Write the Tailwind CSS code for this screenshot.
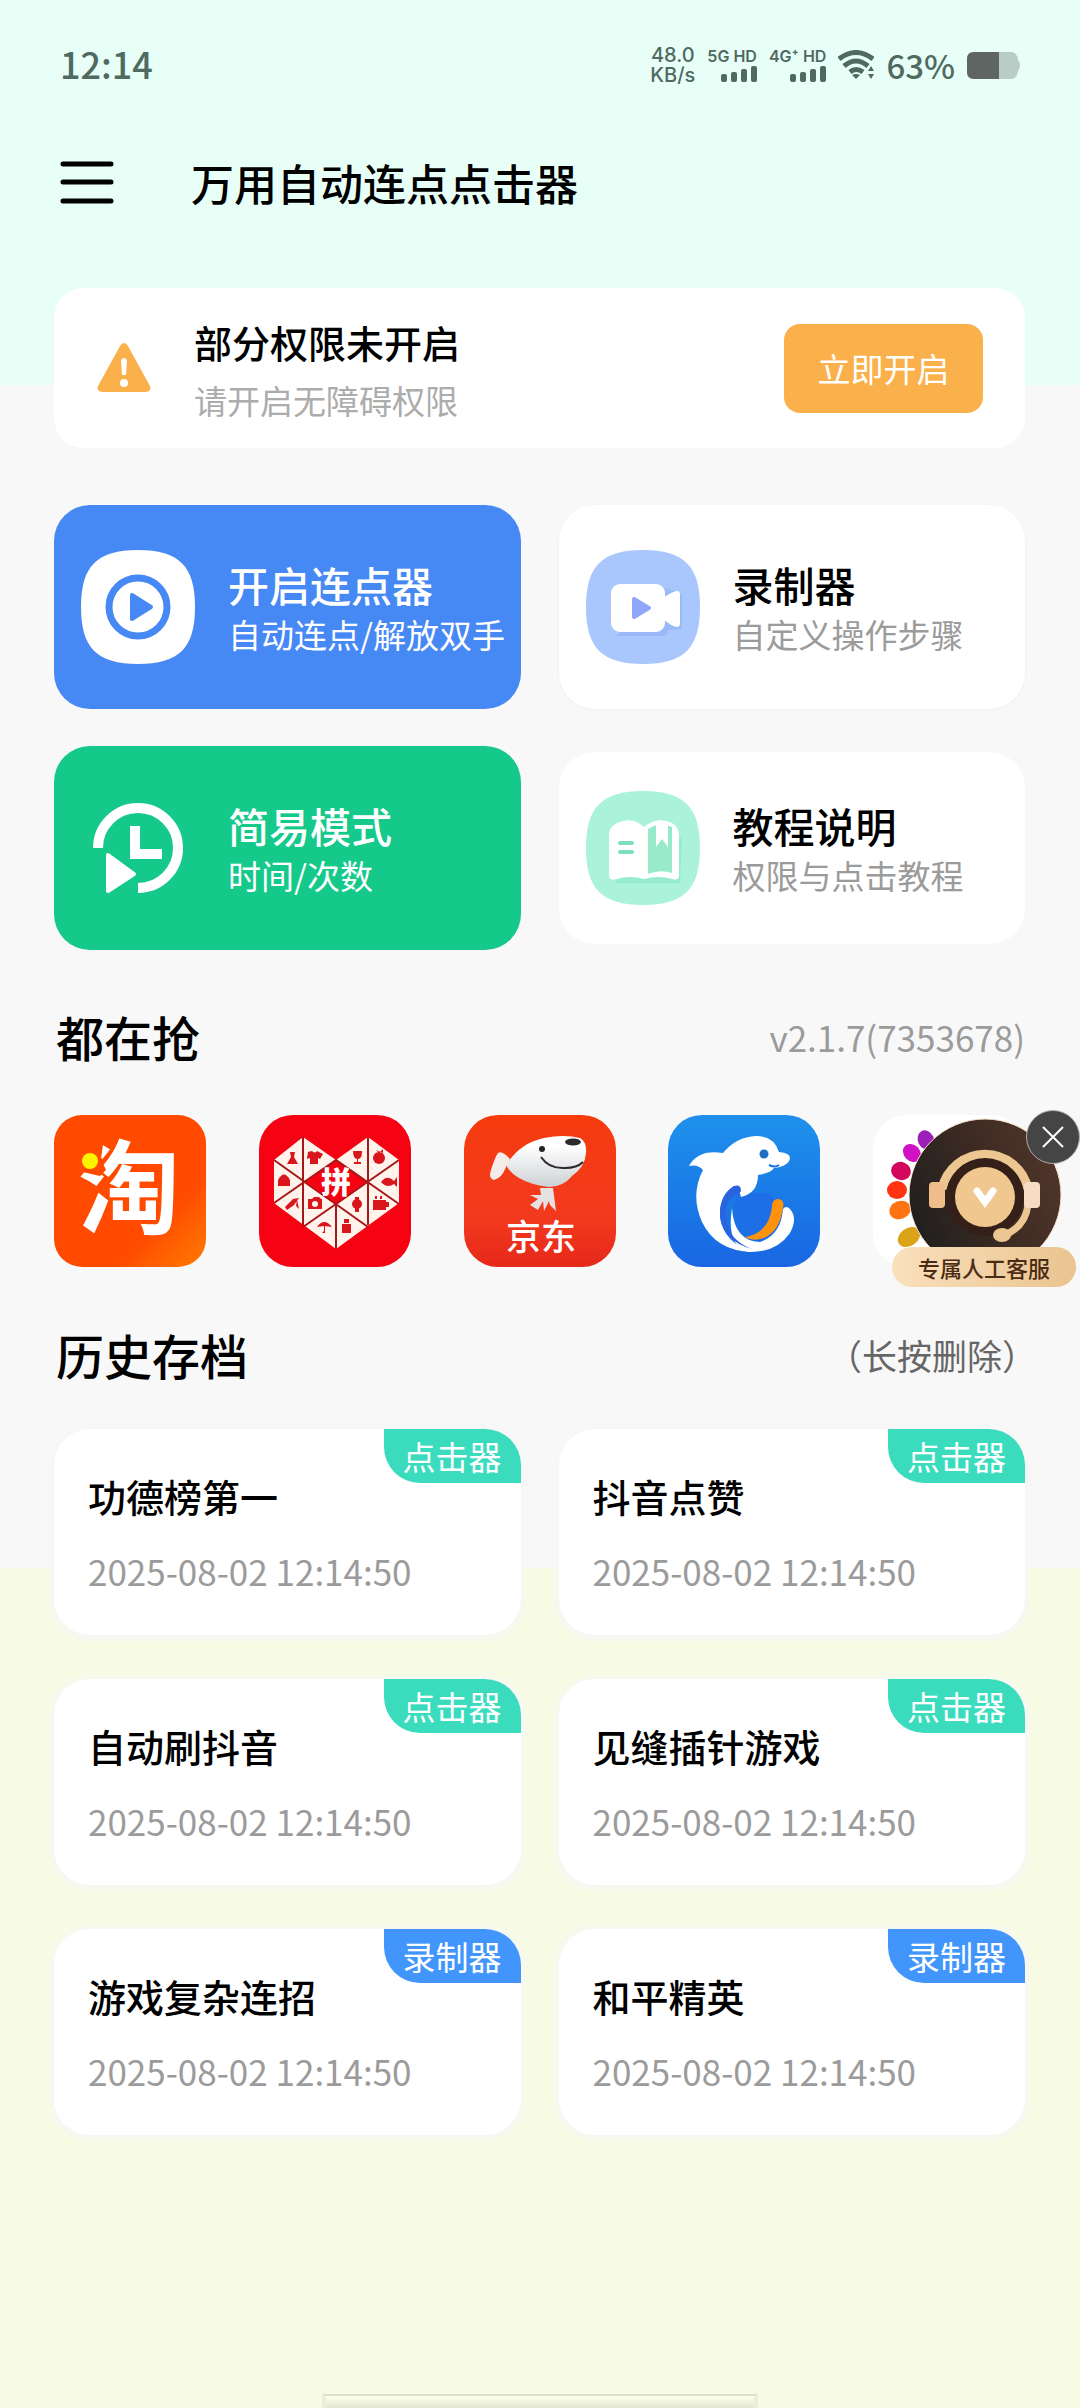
<!DOCTYPE html>
<html lang="zh-CN">
<head>
<meta charset="utf-8">
<meta name="viewport" content="width=device-width, initial-scale=1">
<title>万用自动连点点击器</title>
<script src="https://cdn.jsdelivr.net/npm/@tailwindcss/browser@4"></script>
</head>
<body class="font-['Noto_Sans_CJK_SC',sans-serif] text-black">
<div class="flex min-h-screen flex-col overflow-x-hidden bg-[linear-gradient(#e8fff8_16%,#f8f8f8_16%,#f8f8f8_65.1%,#f8fbe4_65.1%)]">

  <!-- Status bar -->
  <div class="flex h-[130px] items-center justify-between px-[60px] text-[#4f6a61]">
    <time class="pb-1 text-[36px] font-medium leading-none">12:14</time>
    <div class="flex items-center gap-3">
      <div class="text-center font-['Inter',sans-serif] text-[20px] font-medium leading-5"><div>48.0</div><div>KB/s</div></div>
      <div class="flex flex-col items-end gap-0.5">
        <span class="font-['Inter',sans-serif] text-[16px] font-semibold leading-4">5G HD</span>
        <svg class="h-4 w-9" viewBox="0 0 36 16" fill="currentColor"><rect y="8" width="6" height="8" rx="2"/><rect x="10" y="6" width="6" height="10" rx="2"/><rect x="20" y="3" width="6" height="13" rx="2"/><rect x="30" width="6" height="16" rx="2"/></svg>
      </div>
      <div class="flex flex-col items-end gap-0.5">
        <span class="font-['Inter',sans-serif] text-[16px] font-semibold leading-4">4G⁺ HD</span>
        <svg class="h-4 w-9" viewBox="0 0 36 16" fill="currentColor"><rect y="8" width="6" height="8" rx="2"/><rect x="10" y="6" width="6" height="10" rx="2"/><rect x="20" y="3" width="6" height="13" rx="2"/><rect x="30" width="6" height="16" rx="2"/></svg>
      </div>
      <svg class="h-[30px] w-9" viewBox="0 0 36 30" fill="none" stroke="currentColor" stroke-width="5"><path d="M1 9Q18-4 35 9M6 16Q18 6 30 16M12 22Q18 17 25 22" /><path d="M14 25Q18 23 22 25L18 29Z" fill="currentColor" stroke="none"/><path d="M33 16l3 5h-6ZM33 29l3-5h-6Z" fill="currentColor" stroke="none"/></svg>
      <span class="text-[33px] font-medium leading-none">63%</span>
      <svg class="h-[27px] w-[53px]" viewBox="0 0 53 27"><path d="M7 0H44Q50 0 51 8Q55 13 51 19Q50 27 44 27H7Q0 27 0 20V7Q0 0 7 0Z" fill="#b9ccc5"/><path d="M32 0V27H7Q0 27 0 20V7Q0 0 7 0Z" fill="#5f6562"/></svg>
    </div>
  </div>

  <!-- Title bar -->
  <header class="flex h-[104px] items-center gap-[77px] px-[60px]">
    <button type="button" aria-label="菜单" class="h-[43px] w-[54px]">
      <svg class="h-full w-full" viewBox="0 0 54 43" stroke="#000" stroke-width="5" stroke-linecap="round"><path d="M3 3H51M3 21H51M3 40H51"/></svg>
    </button>
    <h1 class="text-[43px] font-medium leading-none">万用自动连点点击器</h1>
  </header>

  <main class="pl-[54px] pr-[55px]">
    <!-- Permission notice -->
    <section class="mt-[54px] flex h-[160px] items-center rounded-[30px] bg-white pl-[43px] pr-[42px]">
      <svg class="h-[50px] w-[54px]" viewBox="0 0 54 50"><path d="M23 3Q27-3 31 3L53 43Q55 49 48 49H6Q-1 49 1 43Z" fill="#fbb14b"/><path d="M24 17Q27 13 30 17L29 32H25Z" fill="#fff"/><circle cx="27" cy="40" r="4" fill="#fff"/></svg>
      <div class="ml-[43px] flex-1 pt-1.5">
        <h2 class="text-[38px] font-medium leading-[58px]">部分权限未开启</h2>
        <p class="text-[33px] leading-[58px] text-[#acacac]">请开启无障碍权限</p>
      </div>
      <button type="button" class="h-[89px] w-[199px] rounded-[16px] bg-[#fbb14b] text-[33px] leading-none text-white">立即开启</button>
    </section>

    <!-- Modes -->
    <section class="mt-[57px] grid grid-cols-2 gap-x-[38px] gap-y-[37px]">
      <button type="button" class="flex h-[204px] items-center gap-[33px] rounded-[36px] bg-[#4688f4] pl-[27px] text-left text-white">
        <svg class="size-[114px] shrink-0" viewBox="0 0 114 114"><path d="M57 0C98 0 114 16 114 57S98 114 57 114 0 98 0 57 16 0 57 0Z" fill="#fff"/><circle cx="57" cy="57" r="29" fill="none" stroke="#4688f4" stroke-width="7"/><path d="M51 45L70 57L51 69Z" fill="#4688f4" stroke="#4688f4" stroke-width="4" stroke-linejoin="round"/></svg>
        <span class="whitespace-nowrap pt-1"><span class="block text-[41px] font-medium leading-[50px]">开启连点器</span><span class="block text-[33px] leading-[50px]">自动连点/解放双手</span></span>
      </button>
      <button type="button" class="flex h-[204px] items-center gap-[33px] rounded-[36px] bg-white pl-[27px] text-left shadow-[0_1px_3px_#eeeeee]">
        <svg class="size-[114px] shrink-0" viewBox="0 0 114 114"><path d="M57 0C98 0 114 16 114 57S98 114 57 114 0 98 0 57 16 0 57 0Z" fill="#a9c7fc"/><path d="M30 86H76Q82 86 82 80L96 79V44L80 38Z" fill="#90aff5" opacity=".6"/><rect x="25" y="34" width="54" height="48" rx="9" fill="#fff"/><path d="M77 48Q85 42 91 41Q94 41 94 45V73Q94 77 91 77Q85 76 77 69Z" fill="#fff"/><path d="M48 49L63 58L48 67Z" fill="#8ea6fb" stroke="#8ea6fb" stroke-width="4" stroke-linejoin="round"/></svg>
        <span class="whitespace-nowrap pt-1"><span class="block text-[41px] font-medium leading-[50px]">录制器</span><span class="block text-[33px] leading-[50px] text-[#9b9b9b]">自定义操作步骤</span></span>
      </button>
      <button type="button" class="flex h-[204px] items-center gap-[33px] rounded-[36px] bg-[#15c98b] pl-[27px] text-left text-white">
        <svg class="size-[114px] shrink-0" viewBox="0 0 114 114"><path d="M17 57A40 40 0 1 1 57 97" fill="none" stroke="#fff" stroke-width="10"/><path d="M54 35V63H81" fill="none" stroke="#fff" stroke-width="10"/><path d="M27 64L53 83L27 100Z" fill="#fff" stroke="#fff" stroke-width="4" stroke-linejoin="round"/></svg>
        <span class="whitespace-nowrap pt-1"><span class="block text-[41px] font-medium leading-[50px]">简易模式</span><span class="block text-[33px] leading-[50px]">时间/次数</span></span>
      </button>
      <button type="button" class="my-1.5 flex items-center gap-[33px] rounded-[36px] bg-white pl-[27px] text-left">
        <svg class="size-[114px] shrink-0" viewBox="0 0 114 114"><path d="M57 0C98 0 114 16 114 57S98 114 57 114 0 98 0 57 16 0 57 0Z" fill="#aaf3da"/><path d="M28 92L94 92L96 45Z" fill="#84e3c0" opacity=".5"/><path d="M58 36Q71 25 86 32Q93 36 93 44V84Q93 90 86 88Q72 84 58 88Z" fill="#fff"/><path d="M62 38Q74 30 86 36V82Q74 78 62 83Z" fill="#97ebcb"/><path d="M70 31H82V56L76 48L70 56Z" fill="#fff"/><path d="M58 36Q46 25 31 32Q23 36 23 44V84Q23 90 30 88Q44 84 58 88Z" fill="#fff"/><path d="M34 52H46M34 61H46" stroke="#7ce0bc" stroke-width="4" stroke-linecap="round"/></svg>
        <span class="whitespace-nowrap pt-1"><span class="block text-[41px] font-medium leading-[50px]">教程说明</span><span class="block text-[33px] leading-[50px] text-[#9b9b9b]">权限与点击教程</span></span>
      </button>
    </section>

    <!-- Shopping apps -->
    <div class="mt-[50px] flex h-[72px] items-center justify-between pl-0.5">
      <h2 class="text-[48px] font-medium leading-none">都在抢</h2>
      <span class="text-[35px] leading-none text-[#9b9b9b]">v2.1.7(7353678)</span>
    </div>
    <section class="relative mt-[43px]">
      <div class="flex justify-between">
        <a href="#" aria-label="淘宝" class="size-[152px] overflow-hidden rounded-[28px] bg-linear-to-br from-[#ff4a00] from-70% to-[#ff7a00]">
          <svg class="size-full" viewBox="0 0 152 152"><text x="24" y="111" font-size="102" font-weight="700" fill="#fff">淘</text><path d="M20 22H50L47 44L52 55L46 61L20 55Z" fill="#ff4a00"/><circle cx="36" cy="46" r="8" fill="#fff200"/></svg>
        </a>
        <a href="#" aria-label="拼多多" class="size-[152px] overflow-hidden rounded-[34px] bg-[#f50313]">
          <svg class="size-full" viewBox="0 0 152 152">
            <path d="M44 22L77 45L109 22L140 45V88L77 134L15 88V45Z" fill="#fff3ec"/>
            <path d="M77 45L109 67L77 90L44 67Z" fill="#f50313"/>
            <path d="M44 22V110M109 22V110M77 90V134M15 45L109 112M15 88L77 45L140 89M44 112L140 45" stroke="#a5181a" stroke-width="2" fill="none"/>
            <path d="M77 47L106 67L77 88L47 67Z" fill="#f50313"/>
            <text x="62" y="78" font-size="30" font-weight="900" fill="#fff">拼</text>
            <g fill="#d8161c">
              <path d="M31 37H36L35 42L39 49H28L32 42Z"/><path d="M49 37L53 36Q56 39 58 36L64 39L61 44L59 43V49H51V43L48 44Z"/>
              <path d="M94 36H103Q103 44 99 44V47H102V49H95V47H98V44Q94 43 94 36Z"/><circle cx="120" cy="43" r="6"/><path d="M117 35L120 38L124 34V38Z"/>
              <path d="M19 65Q25 54 31 65V71H19Z"/><path d="M122 67Q128 59 135 66L138 62V72L135 69Q128 74 122 67Z"/>
              <path d="M26 92L34 84L40 83L35 90L28 95ZM38 84L40 94L37 91Z"/>
              <path d="M49 84H53L55 82H60L62 84H63V94H49ZM56 86A3 3 0 1 0 56 92A3 3 0 1 0 56 86Z" fill-rule="evenodd"/>
              <circle cx="98" cy="89" r="5"/><path d="M96 82H100V97H96Z"/><path d="M114 85H127V95H114ZM127 87H130V92H127ZM116 81H118V84H116ZM121 81H123V84H121Z"/>
              <path d="M58 112Q65 102 73 112L66 111V118H63L65 116V111Z"/><path d="M83 109H92V118H83ZM85 104H90V108H85Z"/>
            </g>
          </svg>
        </a>
        <a href="#" aria-label="京东" class="size-[152px] overflow-hidden rounded-[34px] bg-linear-to-b from-[#f63b0c] via-[#f33a1d] via-65% to-[#e6281a]">
          <svg class="size-full" viewBox="0 0 152 152">
            <defs><linearGradient id="fur" x1="0" y1="0" x2="0" y2="1"><stop offset=".2" stop-color="#fff"/><stop offset="1" stop-color="#cdd0d3"/></linearGradient></defs>
            <path d="M46 44Q38 35 34 38Q31 42 27 55Q24 63 30 65Q38 63 42 52Z" fill="#f4ece8"/>
            <path d="M42 50Q56 28 80 23Q100 19 116 23Q123 27 122 38Q121 52 108 61Q99 72 85 72Q67 70 55 63Q46 58 42 50Z" fill="url(#fur)"/>
            <ellipse cx="109" cy="27" rx="8" ry="3.500" fill="#2b2b2f"/><circle cx="78" cy="34" r="3" fill="#222"/>
            <path d="M77 42Q85 54 101 53Q113 53 119 47" fill="none" stroke="#2b2b2f" stroke-width="2"/>
            <path d="M76 73H89L92 96L86 90L85 86L80 96L79 86L74 95L66 90L74 84L66 80L77 80Z" fill="#e6e2e1"/>
            <text x="42" y="135" font-size="35" font-weight="500" fill="#fff">京东</text>
          </svg>
        </a>
        <a href="#" aria-label="携程" class="size-[152px] overflow-hidden rounded-[34px] bg-linear-to-b from-[#1f91ec] to-[#1a66e2]">
          <svg class="size-full" viewBox="0 0 152 152">
            <path d="M64 93Q66 126 92 127Q113 120 115 94Q118 90 122 94Q130 103 122 118Q108 138 80 137Q58 130 64 93Z" fill="#fff"/>
            <path d="M65 92Q68 118 82 122Q101 118 104 92L108 85L100 78H70Z" fill="#1e6fe5"/>
            <path d="M104 92Q104 84 110 84Q117 85 115 92Q112 116 96 123Q85 127 77 122Q101 118 104 92Z" fill="#ff920c"/>
            <path d="M122 43Q122 38 111 37Q106 21 88 21Q68 22 55 38Q30 34 21 51Q30 49 35 55Q22 80 34 107Q48 136 84 137Q56 127 52 103Q51 80 66 71Q72 76 73 82Q90 78 90 60Q103 58 106 53Q121 51 122 43Z" fill="#fff"/>
            <path d="M66 71Q73 69 73 76L71 79Q56 83 58 103Q60 125 84 134Q54 126 52 98Q52 80 66 71Z" fill="#2b62dd"/>
            <circle cx="96" cy="39" r="4.500" fill="#1c6fc4"/><path d="M101 50Q107 53 111 50" stroke="#1e72e5" stroke-width="2" fill="none"/>
          </svg>
        </a>
        <a href="#" aria-label="更多" class="size-[152px] overflow-hidden rounded-[34px] bg-white">
          <svg class="size-full" viewBox="0 0 152 152">
            <ellipse cx="53" cy="25" rx="10" ry="8" transform="rotate(65 53 25)" fill="#9c1fb8"/>
            <ellipse cx="39" cy="38" rx="10" ry="8" transform="rotate(45 39 38)" fill="#d012c4"/>
            <ellipse cx="28" cy="56" rx="10" ry="9" transform="rotate(22 28 56)" fill="#d3055c"/>
            <ellipse cx="24" cy="75" rx="10" ry="9" fill="#ff3310"/>
            <ellipse cx="27" cy="95" rx="11" ry="9" transform="rotate(-20 27 95)" fill="#ff7312"/>
            <ellipse cx="36" cy="122" rx="12" ry="9" transform="rotate(-35 36 122)" fill="#dba318"/>
          </svg>
        </a>
      </div>

      <!-- Floating customer service -->
      <div class="absolute -right-[51px] -top-2 h-[180px] w-[184px]">
        <button type="button" class="relative block size-full">
          <svg class="absolute inset-0 size-full" viewBox="0 0 184 180">
            <defs><linearGradient id="dark" x1="0" y1=".7" x2="1" y2=".3"><stop offset="0" stop-color="#1f1f1f"/><stop offset=".5" stop-color="#3b2a22"/><stop offset="1" stop-color="#50352a"/></linearGradient></defs>
            <circle cx="93" cy="88" r="76" fill="url(#dark)" stroke="#fbe3cd" stroke-width="1"/>
            <path d="M50 82A44 44 0 0 1 136 82" fill="none" stroke="#ecc791" stroke-width="9"/>
            <circle cx="93" cy="90" r="39" fill="#352019"/><circle cx="93" cy="90" r="30" fill="#efc78f"/>
            <path d="M136 98Q133 121 110 129" fill="none" stroke="#ecc791" stroke-width="7"/><ellipse cx="110" cy="128" rx="9" ry="7" fill="#ecc791"/>
            <rect x="37" y="75" width="16" height="26" rx="4" fill="#eebd8a"/><rect x="132" y="75" width="16" height="26" rx="4" fill="#f8dcc4"/>
            <path d="M85 84L93 95L101 84" fill="none" stroke="#fff" stroke-width="7" stroke-linecap="round"/>
          </svg>
          <span class="absolute inset-x-0 bottom-0 flex h-10 items-center justify-center rounded-[20px] bg-linear-to-r from-[#fae0bd] to-[#eac48f] text-[22px] font-medium leading-none text-[#4a2c14]">专属人工客服</span>
        </button>
        <button type="button" aria-label="关闭" class="absolute -right-1 top-[3px] size-[54px] rounded-full border border-[#b5aeab] bg-[#464545]">
          <svg class="size-full" viewBox="0 0 52 52" stroke="#fff" stroke-width="2"><path d="M16 16L36 36M36 16L16 36"/></svg>
        </button>
      </div>
    </section>

    <!-- Saved scripts -->
    <div class="mt-[51px] flex h-[72px] items-center justify-between pl-0.5">
      <h2 class="text-[48px] font-medium leading-none">历史存档</h2>
      <span class="-mr-3 text-[35px] leading-none text-[#666]">（长按删除）</span>
    </div>
    <section class="mt-[39px] grid grid-cols-2 gap-x-[38px] gap-y-11">
      <article class="relative h-[206px] rounded-[36px] bg-white pl-[34px] pt-[38px] shadow-[0_1px_6px_3px_#f6f6f7]">
        <span class="absolute right-0 top-0 flex h-[54px] w-[137px] items-center justify-center rounded-bl-[36px] rounded-tr-[36px] bg-[#3bdcbe] text-[33px] leading-none text-white">点击器</span>
        <h3 class="text-[38px] font-medium leading-[58px]">功德榜第一</h3>
        <time class="mt-4 block text-[35px] leading-[60px] text-[#9b9b9b]">2025-08-02 12:14:50</time>
      </article>
      <article class="relative h-[206px] rounded-[36px] bg-white pl-[34px] pt-[38px] shadow-[0_1px_6px_3px_#f6f6f7]">
        <span class="absolute right-0 top-0 flex h-[54px] w-[137px] items-center justify-center rounded-bl-[36px] rounded-tr-[36px] bg-[#3bdcbe] text-[33px] leading-none text-white">点击器</span>
        <h3 class="text-[38px] font-medium leading-[58px]">抖音点赞</h3>
        <time class="mt-4 block text-[35px] leading-[60px] text-[#9b9b9b]">2025-08-02 12:14:50</time>
      </article>
      <article class="relative h-[206px] rounded-[36px] bg-white pl-[34px] pt-[38px] shadow-[0_1px_6px_3px_#f6f6f7]">
        <span class="absolute right-0 top-0 flex h-[54px] w-[137px] items-center justify-center rounded-bl-[36px] rounded-tr-[36px] bg-[#3bdcbe] text-[33px] leading-none text-white">点击器</span>
        <h3 class="text-[38px] font-medium leading-[58px]">自动刷抖音</h3>
        <time class="mt-4 block text-[35px] leading-[60px] text-[#9b9b9b]">2025-08-02 12:14:50</time>
      </article>
      <article class="relative h-[206px] rounded-[36px] bg-white pl-[34px] pt-[38px] shadow-[0_1px_6px_3px_#f6f6f7]">
        <span class="absolute right-0 top-0 flex h-[54px] w-[137px] items-center justify-center rounded-bl-[36px] rounded-tr-[36px] bg-[#3bdcbe] text-[33px] leading-none text-white">点击器</span>
        <h3 class="text-[38px] font-medium leading-[58px]">见缝插针游戏</h3>
        <time class="mt-4 block text-[35px] leading-[60px] text-[#9b9b9b]">2025-08-02 12:14:50</time>
      </article>
      <article class="relative h-[206px] rounded-[36px] bg-white pl-[34px] pt-[38px] shadow-[0_1px_6px_3px_#f6f6f7]">
        <span class="absolute right-0 top-0 flex h-[54px] w-[137px] items-center justify-center rounded-bl-[36px] rounded-tr-[36px] bg-[#4296fb] text-[33px] leading-none text-white">录制器</span>
        <h3 class="text-[38px] font-medium leading-[58px]">游戏复杂连招</h3>
        <time class="mt-4 block text-[35px] leading-[60px] text-[#9b9b9b]">2025-08-02 12:14:50</time>
      </article>
      <article class="relative h-[206px] rounded-[36px] bg-white pl-[34px] pt-[38px] shadow-[0_1px_6px_3px_#f6f6f7]">
        <span class="absolute right-0 top-0 flex h-[54px] w-[137px] items-center justify-center rounded-bl-[36px] rounded-tr-[36px] bg-[#4296fb] text-[33px] leading-none text-white">录制器</span>
        <h3 class="text-[38px] font-medium leading-[58px]">和平精英</h3>
        <time class="mt-4 block text-[35px] leading-[60px] text-[#9b9b9b]">2025-08-02 12:14:50</time>
      </article>
    </section>
  </main>

  <!-- Gesture bar -->
  <div class="mx-auto mt-auto h-[14px] w-[436px] border-x-4 border-t-2 border-x-[#ebefd8] border-t-[#dde1c9] bg-linear-to-b from-[#fcffe9] to-[#e4e8d1]"></div>
</div>
</body>
</html>
